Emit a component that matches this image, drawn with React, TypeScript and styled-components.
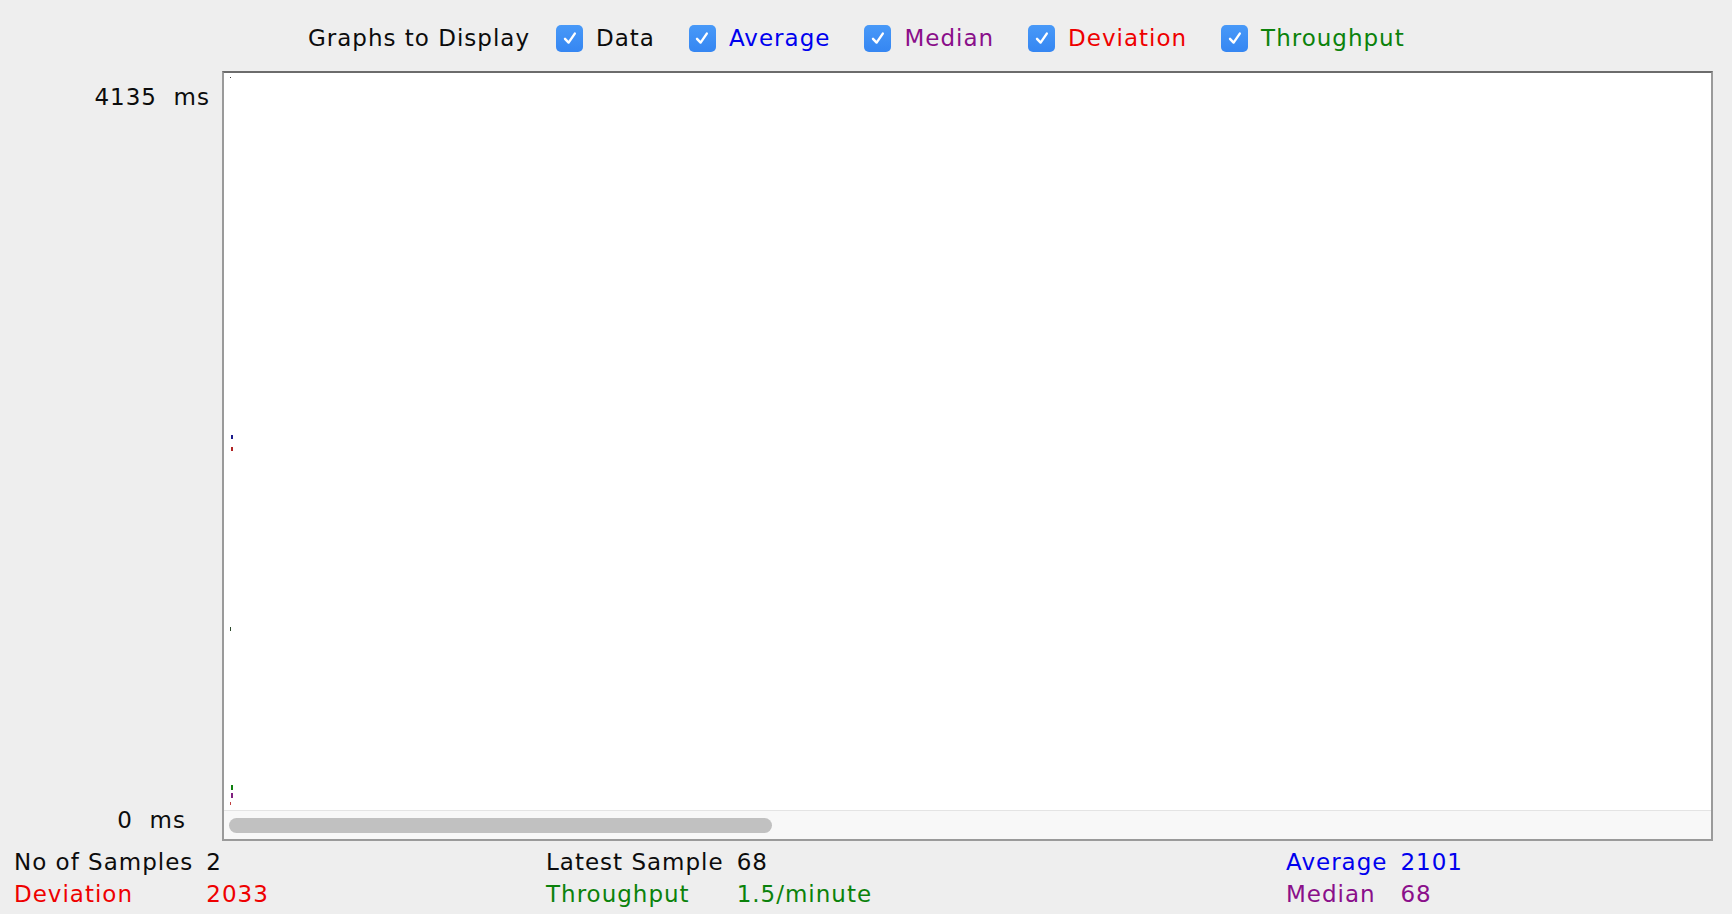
import React from "react";
import styled, { createGlobalStyle } from "styled-components";

const Global = createGlobalStyle`
  html, body { margin: 0; padding: 0; background: #eeeeee; }
  body { font-family: "DejaVu Sans", "Liberation Sans", sans-serif; }
  * { box-sizing: border-box; }
`;

const Page = styled.div`
  width: 1732px;
  height: 914px;
  background: #eeeeee;
  display: flex;
  flex-direction: column;
  font-family: "DejaVu Sans", "Liberation Sans", sans-serif;
  font-size: 23px;
  letter-spacing: 1px;
  color: #0c0c0c;
  overflow: hidden;
`;

const Header = styled.div`
  height: 71px;
  padding: 5px 0 0 308px;
  display: flex;
  align-items: center;
`;

const HeaderTitle = styled.span`
  margin-right: 26px;
`;

const CheckItem = styled.label<{ $color: string }>`
  display: flex;
  align-items: center;
  gap: 13px;
  margin-right: 34px;
  color: ${(p) => p.$color};
`;

const Box = styled.span`
  width: 27px;
  height: 27px;
  border-radius: 5px;
  background: linear-gradient(#4899f8, #3586f2);
  display: inline-flex;
  align-items: center;
  justify-content: center;
`;

const ChartRow = styled.div`
  height: 770px;
  display: grid;
  grid-template-columns: 222px 1491px;
`;

const AxisLabels = styled.div`
  display: flex;
  flex-direction: column;
  justify-content: space-between;
  align-items: flex-end;
  padding: 13px 12px 8px 0;
`;

const AxisLabel = styled.span<{ $inset?: number }>`
  line-height: 26px;
  white-space: pre;
  margin-right: ${(p) => p.$inset ?? 0}px;
`;

const ChartPanel = styled.div`
  display: flex;
  flex-direction: column;
  background: #ffffff;
  border-top: 2px solid #6c6c6c;
  border-left: 2px solid #9a9a9a;
  border-right: 2px solid #9a9a9a;
  border-bottom: 2px solid #9a9a9a;
`;

const PlotArea = styled.div`
  flex: 1;
  position: relative;
  background: #ffffff;
`;

const ScrollTrack = styled.div`
  height: 29px;
  flex: none;
  border-top: 1px solid #e4e4e4;
  background: #f8f8f8;
  padding: 7px 0 0 5px;
`;

const ScrollThumb = styled.div`
  width: 543px;
  height: 15px;
  border-radius: 8px;
  background: #c1c1c1;
`;

const Stats = styled.div`
  padding: 5px 0 0 14px;
  display: grid;
  grid-template-columns: 532px 740px 1fr;
`;

const StatBlock = styled.div`
  display: grid;
  grid-template-columns: auto auto;
  justify-content: start;
  column-gap: 13px;
  line-height: 32px;
`;

const StatText = styled.span<{ $color: string }>`
  color: ${(p) => p.$color};
  white-space: pre;
`;

const BLACK = "#0c0c0c";
const BLUE = "#0000ee";
const PURPLE = "#8a0f8a";
const RED = "#ee0000";
const GREEN = "#0b820b";

const Check = () => (
  <svg width="18" height="18" viewBox="0 0 18 18">
    <path d="M4 9.8 L7.6 13.6 L13.8 4.6" fill="none" stroke="#ffffff" strokeWidth="2.4" strokeLinecap="round" strokeLinejoin="round" />
  </svg>
);

const items: { label: string; color: string }[] = [
  { label: "Data", color: BLACK },
  { label: "Average", color: BLUE },
  { label: "Median", color: PURPLE },
  { label: "Deviation", color: RED },
  { label: "Throughput", color: GREEN },
];

const marks: { x: number; y: number; w: number; h: number; c: string }[] = [
  { x: 6, y: 4, w: 1, h: 1, c: "#444444" },
  { x: 7, y: 362, w: 2, h: 4, c: "#1c1c8c" },
  { x: 7, y: 374, w: 2, h: 4, c: "#b02222" },
  { x: 6, y: 554, w: 1, h: 4, c: "#2c4a2c" },
  { x: 7, y: 712, w: 2, h: 5, c: "#108010" },
  { x: 7, y: 720, w: 2, h: 5, c: "#802080" },
  { x: 6, y: 729, w: 1, h: 3, c: "#c04040" },
];

const stats: [string, string, string][][] = [
  [
    ["No of Samples", "2", BLACK],
    ["Deviation", "2033", RED],
  ],
  [
    ["Latest Sample", "68", BLACK],
    ["Throughput", "1.5/minute", GREEN],
  ],
  [
    ["Average", "2101", BLUE],
    ["Median", "68", PURPLE],
  ],
];

export default function App() {
  return (
    <Page>
      <Global />
      <Header>
        <HeaderTitle>Graphs to Display</HeaderTitle>
        {items.map((it) => (
          <CheckItem key={it.label} $color={it.color}>
            <Box>
              <Check />
            </Box>
            <span>{it.label}</span>
          </CheckItem>
        ))}
      </Header>
      <ChartRow>
        <AxisLabels>
          <AxisLabel>{"4135  ms"}</AxisLabel>
          <AxisLabel $inset={24}>{"0  ms"}</AxisLabel>
        </AxisLabels>
        <ChartPanel>
          <PlotArea>
            <svg width="100%" height="100%" style={{ display: "block" }}>
              {marks.map((m, i) => (
                <rect key={i} x={m.x} y={m.y} width={m.w} height={m.h} fill={m.c} />
              ))}
            </svg>
          </PlotArea>
          <ScrollTrack>
            <ScrollThumb />
          </ScrollTrack>
        </ChartPanel>
      </ChartRow>
      <Stats>
        {stats.map((block, bi) => (
          <StatBlock key={bi}>
            {block.map(([l, v, c]) => (
              <React.Fragment key={l}>
                <StatText $color={c}>{l}</StatText>
                <StatText $color={c}>{v}</StatText>
              </React.Fragment>
            ))}
          </StatBlock>
        ))}
      </Stats>
    </Page>
  );
}
